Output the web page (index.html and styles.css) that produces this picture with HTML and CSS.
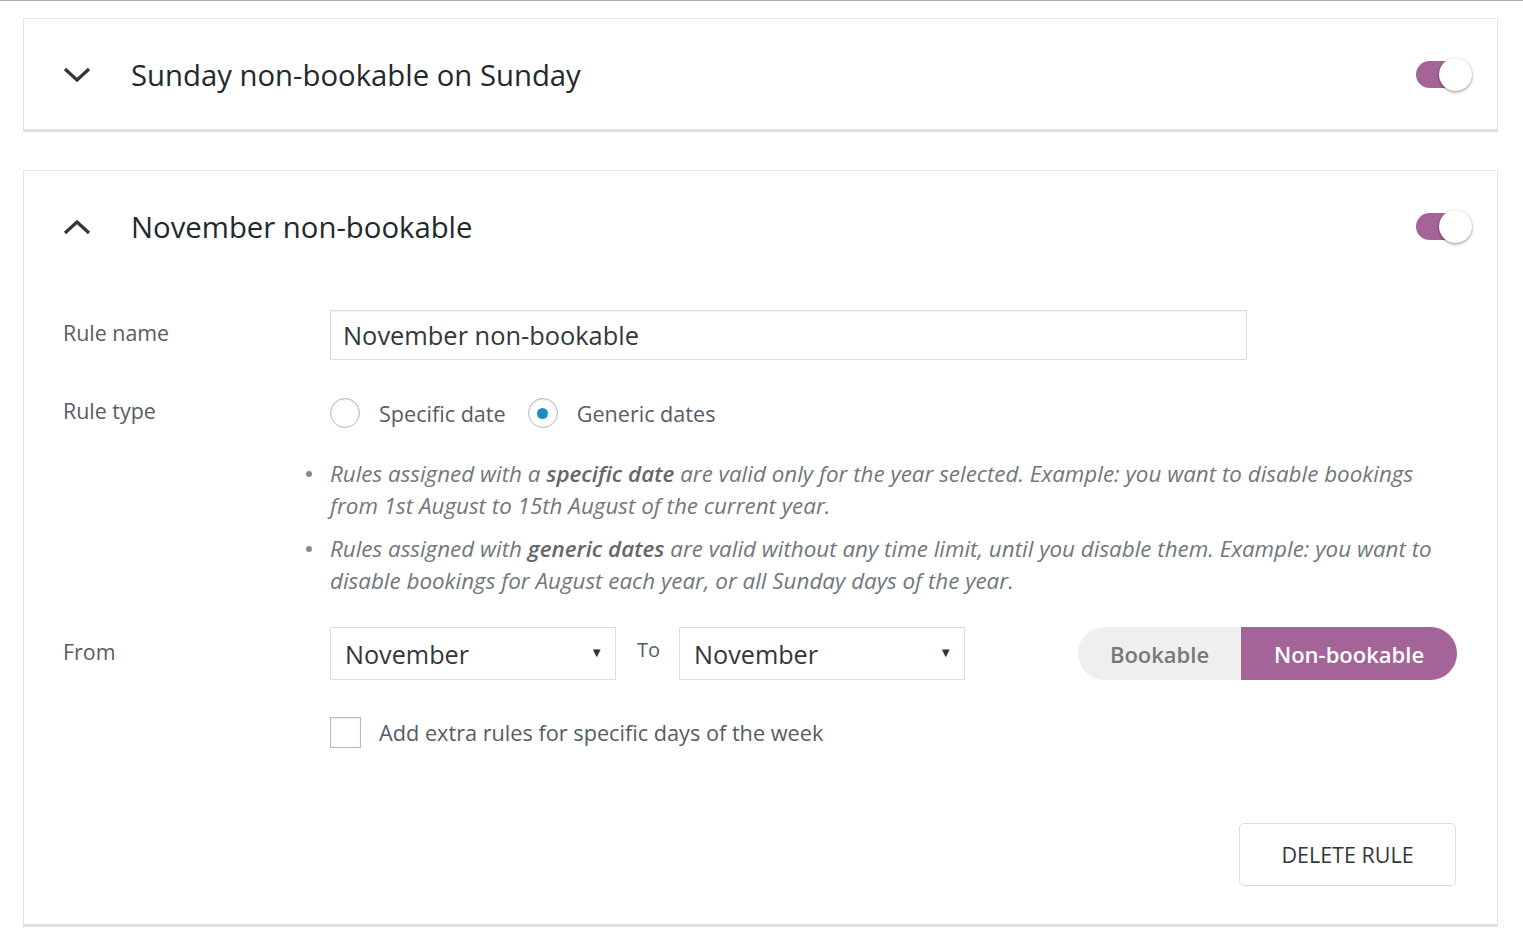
FILE: index.html
```html
<!DOCTYPE html>
<html lang="en">
<head>
<meta charset="utf-8">
<title>Rules</title>
<link rel="stylesheet" href="styles.css">
</head>
<body>
<div class="page">
  <section class="card">
    <header class="card-head">
      <svg class="chev" width="28" height="16" viewBox="0 0 28 16"><path d="M2 2 L14 13 L26 2" fill="none" stroke="#32373c" stroke-width="3.2"/></svg>
      <h2 class="card-title">Sunday non-bookable on Sunday</h2>
      <span class="toggle"><span class="knob"></span></span>
    </header>
  </section>

  <section class="card">
    <header class="card-head">
      <svg class="chev" width="28" height="16" viewBox="0 0 28 16"><path d="M2 14 L14 3 L26 14" fill="none" stroke="#32373c" stroke-width="3.2"/></svg>
      <h2 class="card-title">November non-bookable</h2>
      <span class="toggle"><span class="knob"></span></span>
    </header>
    <div class="card-body">
      <div class="row row-name">
        <div class="label">Rule name</div>
        <div class="control"><div class="text-input">November non-bookable</div></div>
      </div>
      <div class="row row-type">
        <div class="label">Rule type</div>
        <div class="control radios">
          <span class="radio"></span><span class="radio-label">Specific date</span>
          <span class="radio checked"></span><span class="radio-label">Generic dates</span>
        </div>
      </div>
      <div class="row row-help">
        <div></div>
        <ul class="help">
          <li>Rules assigned with a <b>specific date</b> are valid only for the year selected. Example: you want to disable bookings<br>from 1st August to 15th August of the current year.</li>
          <li>Rules assigned with <b>generic dates</b> are valid without any time limit, until you disable them. Example: you want to<br>disable bookings for August each year, or all Sunday days of the year.</li>
        </ul>
      </div>
      <div class="row row-from">
        <div class="label">From</div>
        <div class="control from-controls">
          <div class="select">November<span class="arrow">▼</span></div>
          <span class="to">To</span>
          <div class="select">November<span class="arrow">▼</span></div>
          <div class="seg">
            <span class="seg-item">Bookable</span>
            <span class="seg-item active">Non-bookable</span>
          </div>
        </div>
      </div>
      <div class="row row-check">
        <div></div>
        <div class="control checks">
          <span class="checkbox"></span><span class="check-label">Add extra rules for specific days of the week</span>
        </div>
      </div>
      <div class="actions">
        <button class="delete">DELETE RULE</button>
      </div>
    </div>
  </section>
</div>
</body>
</html>
```

FILE: styles.css
```css
* { box-sizing: border-box; }
html, body { margin: 0; padding: 0; background: #fff; }
body {
  font-family: "Open Sans", "Noto Sans", sans-serif;
  color: #32373c;
  border-top: 1px solid #a8a8a8;
  height: 940px;
  overflow: hidden;
}
.page {
  padding: 17px 25px 0 23px;
  display: flex;
  flex-direction: column;
  gap: 38px;
}
.card {
  background: #fff;
  border: 1px solid #e4e4e4;
  border-bottom: 3px solid #e0e0e0;
}
.card-head {
  height: 110px;
  display: flex;
  align-items: center;
  padding: 0 26px 0 39px;
}
.chev { flex: none; margin-top: 1px; }
.card-title {
  margin: 2px 0 0 40px;
  font-weight: 400;
  font-size: 29.3px;
  color: #23282d;
  flex: 1;
}
.toggle {
  position: relative;
  width: 55px;
  height: 27px;
  border-radius: 14px;
  background: #a46497;
  flex: none;
}
.knob {
  position: absolute;
  right: -1px;
  top: -3px;
  width: 33px;
  height: 33px;
  border-radius: 50%;
  background: #fff;
  box-shadow: 0 1px 3px rgba(0,0,0,0.45);
}
.card-body {
  padding: 0 40px 38px 39px;
}
.row {
  display: grid;
  grid-template-columns: 267px 1fr;
  align-items: center;
}
.label {
  font-size: 21.4px;
  line-height: 24px;
  color: #555d66;
  padding-bottom: 4px;
}
.row-name { margin-top: 29px; }
.text-input {
  width: 917px;
  height: 50px;
  border: 1px solid #ddd;
  box-shadow: inset 0 1px 2px rgba(0,0,0,0.07);
  padding: 0 12px;
  display: flex;
  align-items: center;
  font-size: 25.4px;
  color: #32373c;
}
.row-type { margin-top: 38px; }
.radios {
  display: flex;
  align-items: center;
  height: 30px;
}
.radio {
  width: 30px;
  height: 30px;
  border-radius: 50%;
  border: 1px solid #b4b9be;
  box-shadow: inset 0 1px 2px rgba(0,0,0,0.1);
  display: inline-flex;
  align-items: center;
  justify-content: center;
  flex: none;
}
.radio.checked::after {
  content: "";
  width: 11px;
  height: 11px;
  border-radius: 50%;
  background: #1e8cbe;
}
.radio-label {
  font-size: 21.6px;
  color: #555d66;
  margin: 0 22px 0 19px;
}
.row-help { margin-top: 30px; align-items: start; }
.help {
  margin: 0;
  padding: 0;
  list-style: none;
  font-style: italic;
  font-size: 22.4px;
  line-height: 32px;
  color: #72777c;
}
.help li {
  position: relative;
  margin-bottom: 11px;
  white-space: nowrap;
}
.help li::before {
  content: "";
  position: absolute;
  left: -24px;
  top: 13px;
  width: 6px;
  height: 6px;
  border-radius: 50%;
  background: #888;
}
.help b { font-weight: 600; color: #666; }
.row-from { margin-top: 19px; }
.from-controls {
  display: flex;
  align-items: center;
}
.select {
  position: relative;
  width: 286px;
  height: 53px;
  border: 1px solid #ddd;
  display: flex;
  align-items: center;
  padding: 0 14px;
  font-size: 25.2px;
  color: #32373c;
}
.arrow {
  position: absolute;
  right: 12px;
  top: 15px;
  font-size: 13px;
  color: #333;
}
.to {
  font-size: 20px;
  color: #555d66;
  margin: 0 19px 0 21px;
  position: relative;
  top: -4px;
}
.seg {
  margin-left: auto;
  display: flex;
  height: 53px;
  border-radius: 27px;
  overflow: hidden;
}
.seg-item {
  display: flex;
  align-items: center;
  justify-content: center;
  font-size: 22px;
  font-weight: 600;
  background: #efefef;
  color: #777;
  width: 163px;
}
.seg-item.active {
  background: #a46497;
  color: #fff;
  width: 216px;
}
.row-check { margin-top: 37px; }
.checks { display: flex; align-items: center; }
.checkbox {
  width: 31px;
  height: 31px;
  border: 1px solid #b4b9be;
  box-shadow: inset 0 1px 2px rgba(0,0,0,0.08);
  flex: none;
}
.check-label {
  font-size: 21.7px;
  color: #555d66;
  margin-left: 18px;
}
.actions {
  display: flex;
  justify-content: flex-end;
  margin-top: 75px;
}
.delete {
  width: 217px;
  height: 63px;
  border: 1px solid #ddd;
  border-radius: 5px;
  background: #fff;
  font-family: "Open Sans", "Noto Sans", sans-serif;
  font-size: 21.5px;
  color: #32373c;
  margin-right: 1px;
}
```
